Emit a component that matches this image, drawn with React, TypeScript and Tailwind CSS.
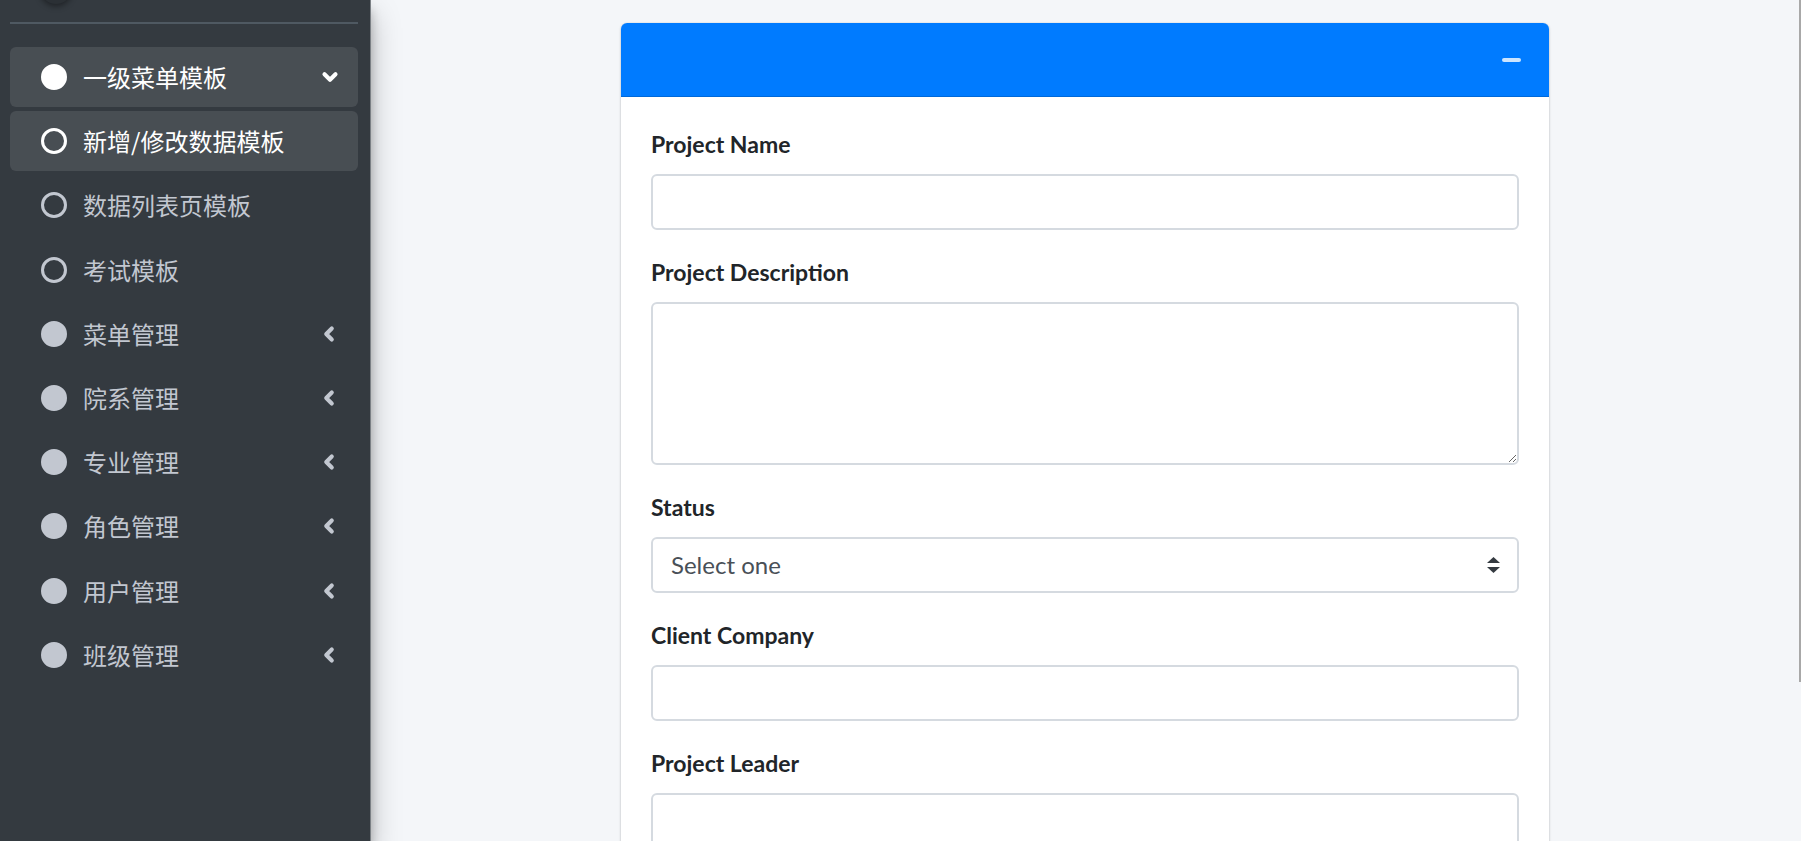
import React from 'react';
import { ChevronDown, ChevronLeft } from 'lucide-react';

type MenuItem = {
  label: string;
  icon: 'solid' | 'hollow';
  active?: boolean;
  arrow?: 'down' | 'left';
};

const menu: MenuItem[] = [
  { label: '一级菜单模板', icon: 'solid', active: true, arrow: 'down' },
  { label: '新增/修改数据模板', icon: 'hollow', active: true },
  { label: '数据列表页模板', icon: 'hollow' },
  { label: '考试模板', icon: 'hollow' },
  { label: '菜单管理', icon: 'solid', arrow: 'left' },
  { label: '院系管理', icon: 'solid', arrow: 'left' },
  { label: '专业管理', icon: 'solid', arrow: 'left' },
  { label: '角色管理', icon: 'solid', arrow: 'left' },
  { label: '用户管理', icon: 'solid', arrow: 'left' },
  { label: '班级管理', icon: 'solid', arrow: 'left' },
];

const cjk = { fontFamily: '"Noto Sans CJK SC", "Noto Sans", sans-serif' };
const latin = { fontFamily: 'Lato, "Noto Sans", sans-serif' };

function NavIcon({ kind, active }: { kind: 'solid' | 'hollow'; active?: boolean }) {
  const color = active ? 'border-white bg-white' : 'border-[#c2c7d0] bg-[#c2c7d0]';
  if (kind === 'solid') {
    return <span className={`block h-[26px] w-[26px] shrink-0 rounded-full border-[3px] ${color}`} />;
  }
  return (
    <span
      className={`block h-[26px] w-[26px] shrink-0 rounded-full border-[3px] ${
        active ? 'border-white' : 'border-[#c2c7d0]'
      }`}
    />
  );
}

function Sidebar() {
  return (
    <aside className="relative z-10 flex h-[841px] w-[371px] shrink-0 flex-col border-r border-[#7b8085] bg-[#343a40] pl-[10px] pr-[12px] shadow-[0_14px_28px_rgba(0,0,0,0.25),0_10px_10px_rgba(0,0,0,0.22)]">
      {/* user panel, scrolled mostly out of view */}
      <div className="flex h-[22px] items-start pl-[30px]">
        <div className="-mt-[32px] h-[36px] w-[32px] rounded-full bg-[#2b3035] shadow-[0_2px_6px_rgba(0,0,0,0.45)]" />
      </div>
      <div className="h-[2px] bg-[#4f5962]" />
      <nav className="mt-[23px] flex flex-col gap-[4.2px]">
        {menu.map((item) => (
          <div
            key={item.label}
            className={`flex h-[60px] items-center rounded-[6px] pl-[31px] pr-[16px] ${
              item.active ? 'bg-[rgba(255,255,255,0.1)] text-white' : 'text-[#c2c7d0]'
            }`}
          >
            <NavIcon kind={item.icon} active={item.active} />
            <span className="ml-[16px] flex-1 text-[24px] leading-[36px]" style={cjk}>
              {item.label}
            </span>
            {item.arrow === 'down' && <ChevronDown size={22} strokeWidth={4.5} className="mr-[1px] text-white" />}
            {item.arrow === 'left' && (
              <ChevronLeft size={22} strokeWidth={4.5} className="mr-[2px] text-[#c2c7d0]" />
            )}
          </div>
        ))}
      </nav>
    </aside>
  );
}

function Field({ label, children }: { label: string; children: React.ReactNode }) {
  return (
    <div className="mb-[24px]">
      <label className="mb-[12px] block text-[23px] font-bold leading-[36px] text-[#212529]" style={latin}>
        {label}
      </label>
      {children}
    </div>
  );
}

const inputCls =
  'block w-full rounded-[6px] border-2 border-[#d5dae0] bg-white px-[18px] text-[24px] text-[#495057] outline-none';

function ProjectCard() {
  return (
    <div className="w-[928px] self-start overflow-hidden rounded-[6px] bg-white shadow-[0_0_1px_rgba(0,0,0,0.2),0_1px_3px_rgba(0,0,0,0.2)]">
      <div className="flex h-[74px] items-center justify-end border-b border-[#0069d9] bg-[#007bff] pr-[28px]">
        <span className="block h-[4px] w-[19px] rounded-full bg-[#cce5ff]" />
      </div>
      <div className="px-[30px] pt-[29px]" style={latin}>
        <Field label="Project Name">
          <input className={`${inputCls} h-[56px]`} />
        </Field>
        <Field label="Project Description">
          <textarea className={`${inputCls} h-[163px] py-[9px]`} />
        </Field>
        <Field label="Status">
          <div className={`${inputCls} flex h-[56px] items-center justify-between pr-[17px]`}>
            <span>Select one</span>
            <svg width="13" height="16" viewBox="0 0 13 16" className="text-[#343a40]">
              <path d="M6.5 0 L13 6 L0 6 Z" fill="currentColor" />
              <path d="M6.5 16 L13 10 L0 10 Z" fill="currentColor" />
            </svg>
          </div>
        </Field>
        <Field label="Client Company">
          <input className={`${inputCls} h-[56px]`} />
        </Field>
        <Field label="Project Leader">
          <input className={`${inputCls} h-[56px]`} />
        </Field>
      </div>
    </div>
  );
}

export default function App() {
  return (
    <div className="flex h-[841px] w-full overflow-hidden bg-[#f4f6f9]">
      <Sidebar />
      <main className="flex flex-1 justify-center pt-[23px]">
        <ProjectCard />
      </main>
      <div className="w-[2px] shrink-0">
        <div className="h-[682px] w-[2px] bg-[#a8a8a8]" />
      </div>
    </div>
  );
}
